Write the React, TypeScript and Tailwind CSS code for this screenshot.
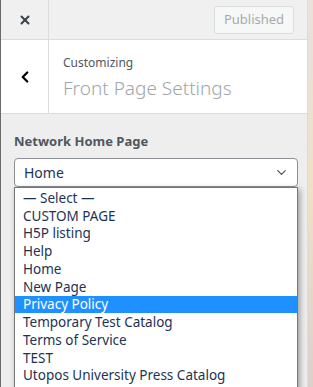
import { X, ChevronLeft, ChevronDown } from 'lucide-react';

const options = [
  '— Select —',
  'CUSTOM PAGE',
  'H5P listing',
  'Help',
  'Home',
  'New Page',
  'Privacy Policy',
  'Temporary Test Catalog',
  'Terms of Service',
  'TEST',
  'Utopos University Press Catalog',
  'Utopos University Press Catalog Settings',
];

export default function App() {
  return (
    <div
      className="flex h-[387px] w-[313px] overflow-hidden bg-[#e9dcd2]"
      style={{ fontFamily: '"Noto Sans", "Open Sans", sans-serif' }}
    >
      <div className="relative flex w-[308px] flex-col border-l border-r border-l-[#6b6b6b] border-r-[#dcdcde] bg-[#eeeeee]">
        {/* top bar */}
        <div className="flex h-[40px] border-b border-[#dcdcde] bg-[#f0f0f1]">
          <div className="flex w-[48px] items-center justify-center border-r border-[#dcdcde]">
            <X size={14} strokeWidth={3.5} className="text-[#3c434a]" />
          </div>
          <div className="flex flex-1 items-center justify-end pr-[13px]">
            <div className="flex h-[28px] w-[80px] items-center justify-center rounded-[3px] border border-[#dcdcde] bg-[#f6f7f7] text-[13px] text-[#a7aaad]">
              Published
            </div>
          </div>
        </div>

        {/* section header */}
        <div className="flex h-[74px] border-b border-[#dcdcde] bg-white">
          <div className="flex w-[48px] items-center justify-center border-r border-[#dcdcde]">
            <ChevronLeft size={18} strokeWidth={3} className="text-black" />
          </div>
          <div className="flex flex-col pl-[14px] pt-[15px]">
            <span className="text-[12px] leading-[16px] text-[#50575e]">Customizing</span>
            <span className="mt-[4px] text-[19px] font-light leading-[26px] text-[#a0a5aa]">Front Page Settings</span>
          </div>
        </div>

        {/* controls */}
        <div className="flex flex-col px-[13px] pt-[18px]">
          <span className="text-[13px] font-bold leading-[18px] text-[#50575e]">Network Home Page</span>
          <div className="mt-[8px] flex h-[29px] w-[284px] items-center justify-between rounded-[4px] border border-[#8c8f94] bg-white pl-[9px] pr-[8px] text-[14px] text-[#1d3354]">
            <span>Home</span>
            <ChevronDown size={15} strokeWidth={2} className="text-[#50575e]" />
          </div>
        </div>

        {/* open dropdown list */}
        <div className="absolute left-[13px] top-[187px] w-[284px] border border-[#767676] bg-white pt-[1px] shadow-[2px_2px_6px_rgba(0,0,0,0.35)]">
          {options.map((o) => (
            <div
              key={o}
              className={`flex h-[17.75px] items-center whitespace-nowrap pl-[8px] text-[13.5px] ${
                o === 'Privacy Policy' ? 'bg-[#1e90ff] text-white' : 'text-[#1d3354]'
              }`}
            >
              {o}
            </div>
          ))}
        </div>
      </div>
      <div className="flex-1 bg-gradient-to-b from-[#e8e2dc] via-[#efe0c8] to-[#dcd0cc]" />
    </div>
  );
}
